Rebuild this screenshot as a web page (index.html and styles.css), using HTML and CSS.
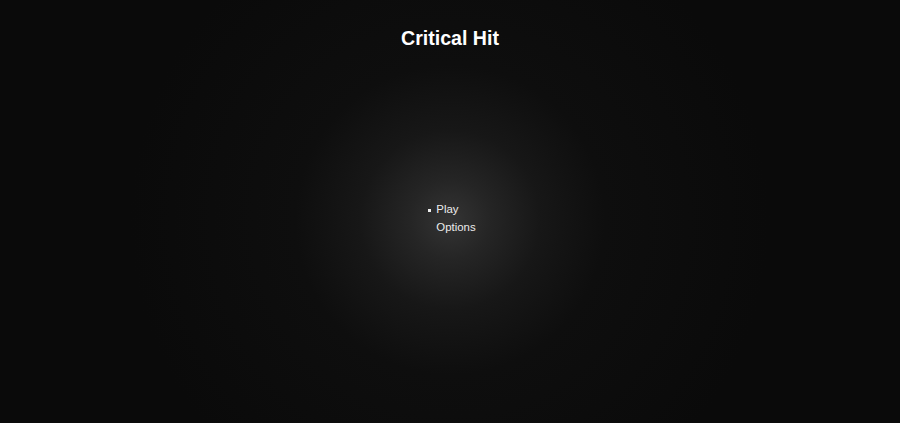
FILE: index.html
```html
<!DOCTYPE html>
<html lang="en">
<head>
    <meta charset="UTF-8">
    <meta name="viewport" content="width=device-width, initial-scale=1.0">
    <title>Critical Hit</title>
    <link rel="stylesheet" href="styles.css">
</head>
<body>
    <div class="screen">
        <h1 class="game-title">Critical Hit</h1>
        <div class="menu-area">
            <ul class="main-menu">
                <li class="menu-item selected">Play</li>
                <li class="menu-item">Options</li>
            </ul>
        </div>
    </div>
</body>
</html>
```
FILE: styles.css
```css
body {
    margin: 0;
    padding: 0;
    box-sizing: border-box;
    font-family: "Liberation Sans", Arial, sans-serif;
    background-color: #0a0a0a;
}

.screen {
    display: flex;
    flex-direction: column;
    min-height: 100vh;
    background: radial-gradient(circle at 50% 52%, #343434 0, #252525 40px, #171717 90px, #0e0e0e 155px, #0a0a0a 320px);
}

.game-title {
    margin: 0;
    padding-top: 26px;
    height: 24px;
    line-height: 24px;
    font-size: 19.6px;
    font-weight: bold;
    text-align: center;
    color: #fff;
}

.menu-area {
    flex: 1;
    display: flex;
    align-items: center;
    justify-content: center;
    padding-bottom: 50px;
}

.main-menu {
    list-style: none;
    margin: 14px 0 0 0;
    padding: 0 0 0 12px;
}

.menu-item {
    position: relative;
    font-size: 11.4px;
    line-height: 17.5px;
    color: #ececec;
}

/* little marker in front of the highlighted entry */
.menu-item.selected::before {
    content: "";
    position: absolute;
    left: -8px;
    top: 8px;
    width: 3px;
    height: 3px;
    background-color: #eee;
}
```
